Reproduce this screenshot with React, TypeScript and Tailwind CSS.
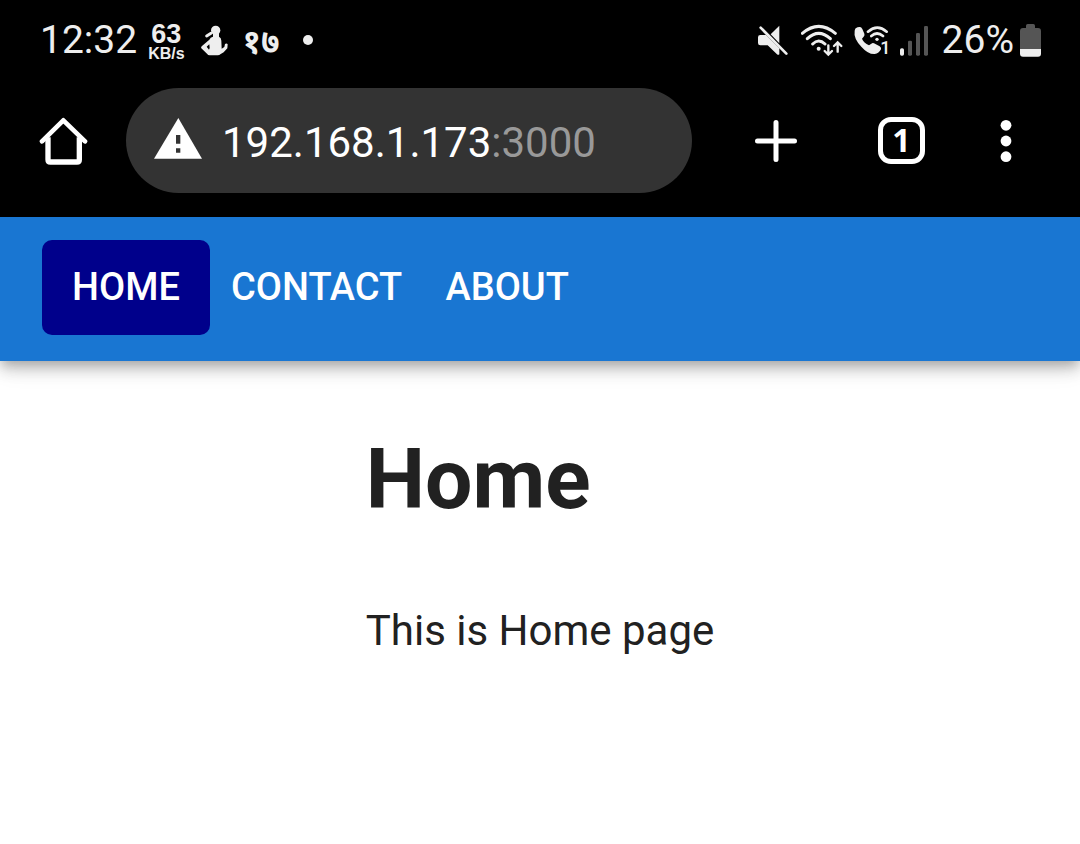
import React, { useState } from "react";

function KarateIcon() {
  return (
    <svg viewBox="33 42 84 96" className="h-8 w-7" fill="#eee" strokeLinecap="round" strokeLinejoin="round" aria-hidden="true">
      <circle cx="77" cy="61" r="14" />
      <path d="m50 78 13-8" stroke="#eee" strokeWidth="9" />
      <path d="M69 70h18v10q7 3 7 12l1 24 8-5 2-9q5-4 8 1l-1 12-11 12-10 6q-2 3-8 3H59q-5 0-8-5l-17-16q-2-4 2-7l22-19q3-8 11-9Z" />
      <path d="m50 110 8-7 1 11-2 5Z" fill="#000" />
    </svg>
  );
}

function MuteIcon() {
  return (
    <svg viewBox="48 42 96 96" className="h-8 w-8" fill="#eee" aria-hidden="true">
      <path d="M115 47v53L89 73Z" />
      <path d="M58 75h17l40 40v18q-3 3-7 0L80 106H58q-7 0-7-7V82q0-7 7-7Z" />
      <path d="m59 53 77 78" stroke="#eee" strokeWidth="8" strokeLinecap="round" />
    </svg>
  );
}

function WifiIcon() {
  return (
    <svg viewBox="180 40 126 102" className="h-[34px] w-[42px]" fill="none" stroke="#eee" strokeWidth="9" strokeLinecap="round" aria-hidden="true">
      <path d="M184 71q49-42 99 0M199 87q34-32 69 0M215 103q18-18 37 0" />
      <circle cx="233" cy="117" r="6" fill="#eee" stroke="none" />
      <path d="M262 107v27m-11-10 11 11 11-11M290 126V99m-11 10 11-11 11 11" strokeWidth="7" />
    </svg>
  );
}

function WifiCallIcon() {
  return (
    <svg viewBox="336 40 114 102" className="h-[34px] w-[38px]" fill="none" stroke="#eee" strokeWidth="8" strokeLinecap="round" aria-hidden="true">
      <path d="M344 56q7-5 13-4 4 0 7 6l6 14q2 5-2 9l-5 6q5 12 21 20l7-5q4-3 8-1l17 9q6 4 4 9-6 12-19 14-20 1-40-22-24-25-20-48 1-4 3-7Z" fill="#eee" stroke="none" />
      <path d="M381 66q28-24 56 0M391 79q17-15 35 0" />
      <circle cx="408" cy="89" r="5" fill="#eee" stroke="none" />
      <text x="418" y="134" fontSize="54" fill="#eee" stroke="none" className="font-[Roboto] font-medium">1</text>
    </svg>
  );
}

function SignalIcon() {
  return (
    <svg viewBox="27 42 84 96" className="h-8 w-7" fill="#555" aria-hidden="true">
      <rect x="27" y="115" width="12" height="22" rx="5" fill="#eee" />
      <rect x="51" y="92" width="12" height="45" rx="4" />
      <rect x="75" y="69" width="12" height="68" rx="4" />
      <rect x="99" y="48" width="12" height="89" rx="4" />
    </svg>
  );
}

function BatteryIcon() {
  return (
    <svg viewBox="390 42 63 99" className="h-[33px] w-[21px]" aria-hidden="true">
      <path d="M408 54v-7q0-5 5-5h17q5 0 5 5v7h9q9 0 9 9v54h-63V63q0-9 9-9Z" fill="#555" />
      <path d="M390 117h63v14q0 9-9 9h-45q-9 0-9-9Z" fill="#eee" />
    </svg>
  );
}

function StatusBar() {
  return (
    <div className="flex h-20 items-center justify-between pr-[39px] pl-10 text-[39px] leading-none text-[#eee]">
      <div className="flex items-center">
        <time>12:32</time>
        <div className="ml-[11px] flex flex-col items-center pt-[2px] font-['Liberation_Sans',sans-serif]">
          <span className="text-[27px] leading-[25px] font-bold">63</span>
          <span className="text-base leading-[14px] font-bold">KB/s</span>
        </div>
        <span className="ml-4"><KarateIcon /></span>
        <span className="ml-[14px] font-['Noto_Sans',sans-serif] text-[33px] font-bold">१७</span>
        <span className="ml-[23px] size-[10px] rounded-full bg-[#eee]" />
      </div>
      <div className="flex items-center">
        <MuteIcon />
        <span className="ml-3"><WifiIcon /></span>
        <span className="ml-[10px]"><WifiCallIcon /></span>
        <span className="ml-[9px]"><SignalIcon /></span>
        <span className="ml-[14px]">26%</span>
        <span className="ml-[6px]"><BatteryIcon /></span>
      </div>
    </div>
  );
}

function BrowserBar() {
  return (
    <div className="flex items-center pt-2 pr-[67px] pb-6 pl-[39px] text-white">
      <button type="button" aria-label="Home page">
        <svg viewBox="57 106 150 150" className="size-[50px]" fill="none" stroke="#fff" strokeLinecap="round" strokeLinejoin="round" aria-hidden="true">
          <path d="m66 182 64-63 65 63" strokeWidth="14" />
          <path d="M84 170v67q0 7 7 7h80q7 0 7-7v-67" strokeWidth="16" strokeLinecap="butt" />
        </svg>
      </button>
      <button type="button" className="ml-[37px] flex h-[105px] grow items-center rounded-full bg-[#333] pl-7 text-[42px]">
        <svg viewBox="402 112 144 123" className="mb-1 h-[41px] w-12 shrink-0" aria-hidden="true">
          <path d="m475 112 71 122H402Z" fill="#fff" />
          <path d="M468 163h13v26h-13zM468 203h13v13h-13z" fill="#333" />
        </svg>
        <span className="ml-5 pt-1 leading-none">
          192.168.1.173<span className="text-[#999]">:3000</span>
        </span>
      </button>
      <button type="button" aria-label="New tab" className="ml-[63px]">
        <svg viewBox="0 0 42 42" className="size-[42px]" stroke="#fff" strokeWidth="5" strokeLinecap="round" aria-hidden="true">
          <path d="M21 2.5v37M2.5 21h37" />
        </svg>
      </button>
      <button type="button" aria-label="Open tabs" className="ml-[81px] flex size-[47px] items-center justify-center rounded-[13px] border-5 border-white pb-[2px] font-['Noto_Sans',sans-serif] text-[32px] leading-none font-bold">
        1
      </button>
      <button type="button" aria-label="Menu" className="ml-[74px]">
        <svg viewBox="0 0 14 48" className="h-12 w-[14px]" fill="#fff" aria-hidden="true">
          <circle cx="7" cy="8.3" r="5.4" />
          <circle cx="7" cy="24" r="5.4" />
          <circle cx="7" cy="39.7" r="5.4" />
        </svg>
      </button>
    </div>
  );
}

const pages = ["Home", "Contact", "About"];

export default function App() {
  const [page, setPage] = useState("Home");
  return (
    <div className="min-h-screen bg-white font-[Roboto,sans-serif] text-[#212121]">
      <header className="bg-black">
        <StatusBar />
        <BrowserBar />
      </header>
      <nav className="flex bg-[#1976d2] px-[42px] pt-[23px] pb-[26px] shadow-[0_5px_10px_-3px_rgba(0,0,0,0.2),0_10px_13px_0_rgba(0,0,0,0.14),0_3px_26px_0_rgba(0,0,0,0.12)]">
        {pages.map((name) => (
          <a
            key={name}
            href={"#" + name.toLowerCase()}
            onClick={() => setPage(name)}
            className={
              "flex h-[95px] min-w-[168px] items-center justify-center rounded-[10px] px-[21px] text-[38px] font-medium text-white uppercase " +
              (page === name ? "bg-[#00008b]" : "")
            }
          >
            {name}
          </a>
        ))}
      </nav>
      <main className="mx-auto w-fit pt-[70px]">
        <h1 className="text-[84px] leading-[98px] font-bold">{page}</h1>
        <p className="mt-[70px] text-[42px] leading-[63px]">This is {page} page</p>
      </main>
    </div>
  );
}
